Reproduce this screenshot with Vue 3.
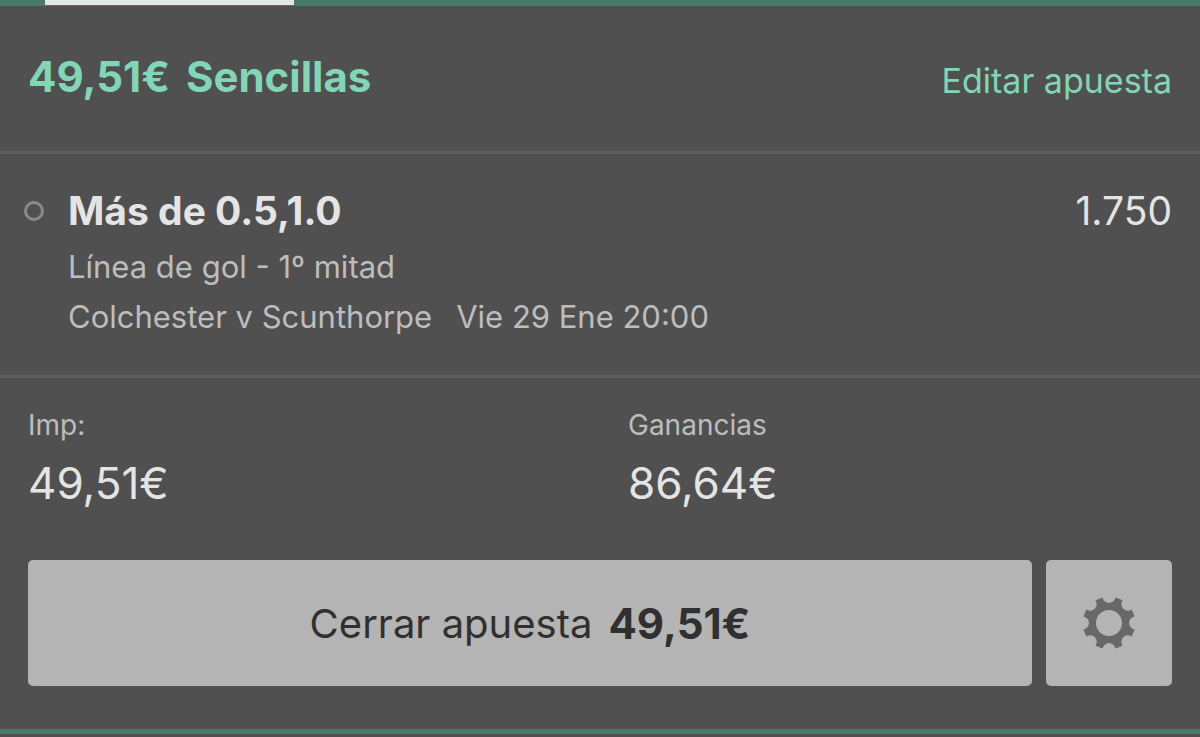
<script setup>
const bet = {
  stake: '49,51€',
  type: 'Sencillas',
  selection: 'Más de 0.5,1.0',
  odds: '1.750',
  market: 'Línea de gol - 1º mitad',
  fixture: 'Colchester v Scunthorpe',
  date: 'Vie 29 Ene 20:00',
  returns: '86,64€',
}

// Eight-toothed gear: flat teeth separated by rounded notches.
function gearPath(radius, notch) {
  const at = (deg) => {
    const a = (deg * Math.PI) / 180
    return `${(radius * Math.sin(a)).toFixed(2)} ${(-radius * Math.cos(a)).toFixed(2)}`
  }
  let d = `M${at(-14)}`
  for (let i = 0; i < 8; i++) {
    d += `A${notch} ${notch} 0 0 0 ${at(i * 45 + 14)}L${at(i * 45 + 31)}`
  }
  return `${d}ZM13 0A13 13 0 1 0 -13 0A13 13 0 1 0 13 0Z`
}
const gear = gearPath(26.4, 6.45)
</script>

<template>
  <main class="slip">
    <div class="tabs"><span class="tab"></span></div>

    <header class="head">
      <h1 class="title"><span>{{ bet.stake }}</span> <span>{{ bet.type }}</span></h1>
      <a class="edit" href="#">Editar apuesta</a>
    </header>

    <section class="selection">
      <span class="marker"></span>
      <div class="details">
        <h2 class="name">{{ bet.selection }}</h2>
        <p class="line">{{ bet.market }}</p>
        <p class="line fixture"><span>{{ bet.fixture }}</span><span>{{ bet.date }}</span></p>
      </div>
      <span class="odds">{{ bet.odds }}</span>
    </section>

    <dl class="totals">
      <div>
        <dt>Imp:</dt>
        <dd>{{ bet.stake }}</dd>
      </div>
      <div>
        <dt>Ganancias</dt>
        <dd>{{ bet.returns }}</dd>
      </div>
    </dl>

    <div class="actions">
      <button class="btn close" type="button">
        <span>Cerrar apuesta</span><strong>{{ bet.stake }}</strong>
      </button>
      <button class="btn settings" type="button" aria-label="Ajustes">
        <svg viewBox="-27 -27 54 54" width="54" height="54" aria-hidden="true">
          <path :d="gear" fill="#686868" fill-rule="evenodd" />
        </svg>
      </button>
    </div>
    <div class="foot"></div>
  </main>
</template>

<style>
body {
  background: #505050;
}
</style>

<style scoped>
.slip {
  background: #505050;
  color: #e4e4e4;
  font-family: Inter, "Liberation Sans", sans-serif;
}
.tabs {
  height: 6px;
  padding-left: 45px;
  background: #487b67;
}
.tab {
  display: block;
  width: 249px;
  height: 5px;
  background: #e5e5e5;
}
.head {
  display: flex;
  align-items: center;
  justify-content: space-between;
  padding: 46px 28px 49px;
  border-bottom: 3px solid #5e5e5e;
}
h1, h2, p, dl, dd {
  margin: 0;
}
.title {
  display: flex;
  gap: 16px;
  font-size: 42px;
  line-height: 50px;
  font-weight: 700;
  color: #80d6b5;
}
.edit {
  padding-top: 8px;
  font-size: 34px;
  line-height: 42px;
  color: #80d6b5;
  text-decoration: none;
}
.selection {
  display: flex;
  align-items: flex-start;
  padding: 32px 28px 33px 24px;
  border-bottom: 3px solid #5e5e5e;
}
.marker {
  box-sizing: border-box;
  width: 20px;
  height: 20px;
  margin: 15px 24px 0 0;
  border: 3px solid #8a8a8a;
  border-radius: 50%;
}
.details {
  flex: 1;
}
.name {
  font-size: 39px;
  line-height: 50px;
  font-weight: 700;
}
.odds {
  font-size: 39px;
  line-height: 50px;
}
.line {
  margin-top: 6px;
  font-size: 31px;
  line-height: 50px;
  color: #bdbdbd;
}
.line + .line {
  margin-top: 0;
}
.fixture {
  display: flex;
  gap: 24px;
}
.totals {
  display: grid;
  grid-template-columns: 1fr 1fr;
  padding: 30px 0 0 28px;
  column-gap: 28px;
}
.totals dt {
  font-size: 28px;
  line-height: 34px;
  color: #bdbdbd;
}
.totals dd {
  margin-top: 13px;
  font-size: 44px;
  line-height: 56px;
}
.actions {
  display: flex;
  gap: 14px;
  padding: 49px 28px 43px;
}
.btn {
  display: flex;
  align-items: center;
  justify-content: center;
  height: 126px;
  padding: 0;
  border: 0;
  border-radius: 5px;
  background: #b4b4b4;
  color: #303030;
  font-family: inherit;
  font-size: 40px;
}
.close {
  flex: 1;
  gap: 16px;
}
.close strong {
  font-size: 42px;
  font-weight: 700;
}
.settings {
  width: 126px;
}
.foot {
  height: 5px;
  background: #487b67;
}
</style>
